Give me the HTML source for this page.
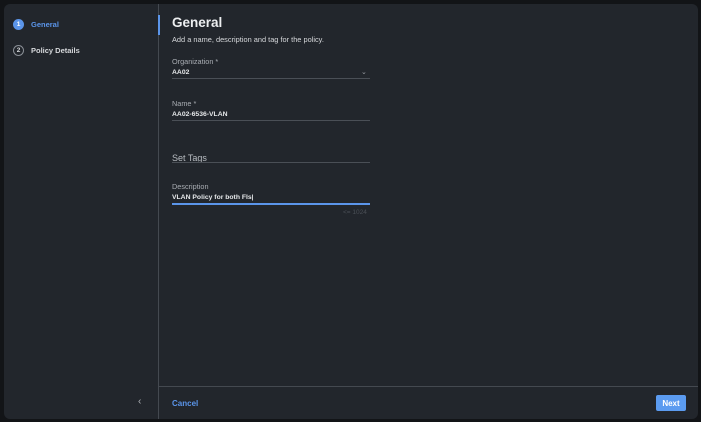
<!DOCTYPE html>
<html><head><style>
*{margin:0;padding:0;box-sizing:border-box}
body{width:701px;height:422px;background:#121417;font-family:"Liberation Sans",sans-serif;position:relative;overflow:hidden}
.panel{position:absolute;left:4px;top:4px;width:694px;height:415px;background:#22262c;border-radius:6px;overflow:hidden}
.side{position:absolute;left:0;top:0;width:155px;height:415px;border-right:1px solid #444950}
.step{position:absolute;left:9px;display:flex;align-items:center;font-size:7.5px;font-weight:bold}
.circ{width:11px;height:11px;border-radius:50%;font-size:6.5px;display:flex;align-items:center;justify-content:center;margin-right:7px}
.abs{position:absolute}
.lbl{font-size:7.3px;color:#a9adb3}
.val{font-size:6.8px;color:#e6e8ea;font-weight:bold}
.line{position:absolute;left:168px;width:198px;height:1px;background:#4a4f56}
</style></head><body>
<div class="panel">
 <div class="side">
  <div class="step" style="top:15px;color:#5b95ea"><div class="circ" style="background:#5b95ea;color:#fff">1</div>General</div>
  <div class="step" style="top:41px;color:#d6d8db"><div class="circ" style="border:1px solid #8a8f96;color:#d6d8db">2</div>Policy Details</div>
  <div class="abs" style="left:134px;top:392px;color:#b0b4b9;font-size:10px">&#8249;</div>
 </div>
 <div class="abs" style="left:154px;top:11px;width:2px;height:20px;background:#5b95ea"></div>
 <div class="abs" style="left:168px;top:11px;font-size:13.5px;font-weight:bold;color:#eceef0">General</div>
 <div class="abs" style="left:168px;top:31px;font-size:7.4px;color:#d6d8db">Add a name, description and tag for the policy.</div>
 <div class="abs lbl" style="left:168px;top:53px">Organization *</div>
 <div class="abs val" style="left:168px;top:65px">AA02</div>
 <div class="abs" style="left:357px;top:64px;font-size:7px;color:#9a9ea4">&#8964;</div>
 <div class="line" style="top:74px"></div>
 <div class="abs lbl" style="left:168px;top:95px">Name *</div>
 <div class="abs val" style="left:168px;top:107px">AA02-6536-VLAN</div>
 <div class="line" style="top:116px"></div>
 <div class="abs" style="left:168px;top:149px;font-size:9px;color:#b8bcc1">Set Tags</div>
 <div class="line" style="top:158px"></div>
 <div class="abs lbl" style="left:168px;top:178px">Description</div>
 <div class="abs val" style="left:168px;top:190px">VLAN Policy for both FIs|</div>
 <div class="line" style="top:199px;height:1.5px;background:#5b95ea"></div>
 <div class="abs" style="left:339px;top:205px;font-size:6.5px;color:#4a4f56">&lt;= 1024</div>
 <div class="abs" style="left:155px;top:382px;width:539px;height:1px;background:#444950"></div>
 <div class="abs" style="left:168px;top:395px;font-size:8px;font-weight:bold;color:#5b95ea">Cancel</div>
 <div class="abs" style="left:652px;top:391px;width:30px;height:16px;background:#5b9bf0;border-radius:2px;color:#fff;font-size:8px;font-weight:bold;display:flex;align-items:center;justify-content:center">Next</div>
</div>
</body></html>
